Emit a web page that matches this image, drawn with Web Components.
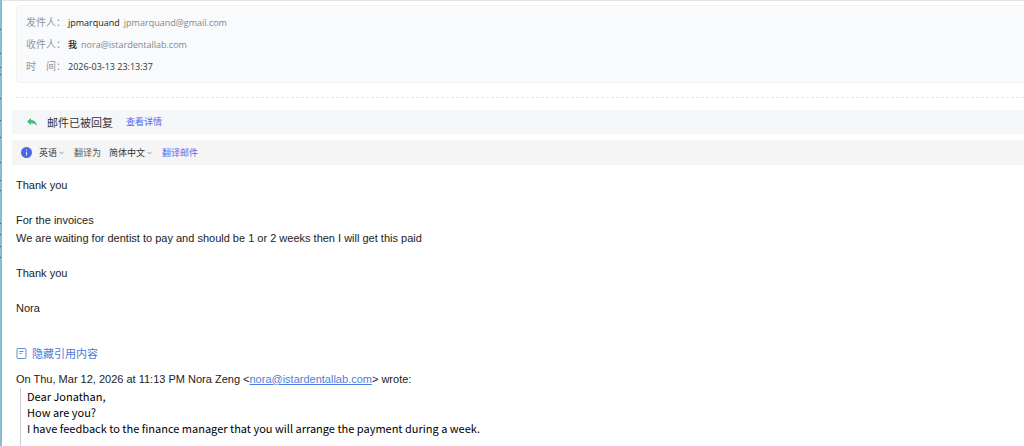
<!DOCTYPE html>
<html lang="zh-CN">
<head>
<meta charset="utf-8">
<title>邮件</title>
<style>
html, body { margin: 0; background: #fff; }
body { font-family: "Liberation Sans", "Noto Sans CJK SC", sans-serif; color: #222; overflow: hidden; }
</style>
</head>
<body>
<mail-view>
  <mail-header>
    <mail-field label="发件人："><strong>jpmarquand</strong>jpmarquand@gmail.com</mail-field>
    <mail-field label="收件人："><strong>我</strong>nora@istardentallab.com</mail-field>
    <mail-field label="时　间："><time datetime="2026-03-13T23:13:37">2026-03-13 23:13:37</time></mail-field>
  </mail-header>
  <reply-notice>邮件已被回复</reply-notice>
  <translate-bar></translate-bar>
  <mail-body>
    <p>Thank you</p>
    <p>For the invoices<br>We are waiting for dentist to pay and should be 1 or 2 weeks then I will get this paid</p>
    <p>Thank you</p>
    <p>Nora</p>
  </mail-body>
  <quoted-mail>
    <span slot="intro">On Thu, Mar 12, 2026 at 11:13 PM Nora Zeng &lt;<mail-address address="nora@istardentallab.com"></mail-address>&gt; wrote:</span>
    <p>Dear Jonathan,</p>
    <p>How are you?</p>
    <p>I have feedback to the finance manager that you will arrange the payment during a week.</p>
  </quoted-mail>
</mail-view>

<script>
function define(name, markup, setup) {
  const template = document.createElement('template');
  template.innerHTML = markup;
  customElements.define(name, class extends HTMLElement {
    connectedCallback() {
      if (this.shadowRoot) return;
      this.attachShadow({ mode: 'open' }).append(template.content.cloneNode(true));
      if (setup) setup(this, this.shadowRoot);
    }
  });
}

define('mail-view', `
<style>
  :host { display: grid; grid-template-columns: 2px minmax(0, 1fr); min-height: 100vh; }
  svg { display: block; width: 2px; height: 100%; background: linear-gradient(90deg, #92c5da, #80b0c5); }
  main { display: flex; flex-direction: column; border-top: 1px solid #e2e2e4; padding: 4px 0 0 10px; }
</style>
<svg aria-hidden="true"><path d="M0 29.500h1M0 53.500h1M0 67.500h1M0 74.500h1M0 98.500h1M0 120.500h1M0 137.500h1M0 162.500h1M0 180.500h1M0 190.500h1M0 223.500h1M0 234.500h1M0 246.500h1M0 257.500h1" stroke="#315b7e" stroke-width="1"/></svg>
<main><slot></slot></main>`);

define('mail-header', `
<style>
  :host { display: block; padding-left: 4px; }
  .card { display: flex; flex-direction: column; gap: 5px; padding: 8px 9px 7px; border: 1px solid #f0f1f2; border-right: 0; border-radius: 5px 0 0 5px; background: #f9fafc; }
  hr { margin: 14px 0 12px; border: 0; border-top: 1px dashed #e6e6e6; }
</style>
<div class="card"><slot></slot></div><hr>`);

define('mail-field', `
<style>
  :host { display: flex; align-items: center; height: 17px; font: 9px/17px "Open Sans", "Noto Sans CJK SC", sans-serif; color: #858789; }
  .label { flex: none; width: 42px; font-size: 10px; color: #949698; }
  ::slotted(strong) { font-weight: 500; color: #222; margin-right: 4px; }
  ::slotted(time) { color: #333; }
</style>
<span class="label"></span><span><slot></slot></span>`,
(host, root) => { root.querySelector('.label').textContent = host.getAttribute('label'); });

define('reply-notice', `
<style>
  :host { display: flex; align-items: center; height: 24px; padding-left: 15px; background: #f5f6fa; font: 11px/18px "Noto Sans CJK SC", sans-serif; color: #333; }
  svg { flex: none; width: 10px; height: 9px; margin-right: 10px; }
  a { margin-left: 13px; font-size: 9px; color: #5069ee; text-decoration: none; }
</style>
<svg viewBox="0 0 10 9" aria-hidden="true"><path d="M0 3.500 4 0v2c3.500 0 5.500 2.200 6 6-1.500-2.100-3.300-2.800-6-2.800V7.300z" fill="#4dbb77"/></svg>
<span><slot></slot></span><a href="#details">查看详情</a>`);

define('language-select', `
<style>
  :host { display: inline-flex; align-items: center; }
  select { appearance: none; field-sizing: content; margin: 0; padding: 0; border: 0; background: none; color: #333; font: 9px/18px "Noto Sans CJK SC", sans-serif; }
  svg { width: 5px; height: 4px; margin-left: 2px; pointer-events: none; }
</style>
<select><option></option></select><svg viewBox="0 0 5 4" aria-hidden="true"><path d="M.5.8l2 2 2-2" fill="none" stroke="#777" stroke-width=".8"/></svg>`,
(host, root) => {
  root.querySelector('option').textContent = host.getAttribute('value');
  root.querySelector('select').setAttribute('aria-label', host.getAttribute('label'));
});

define('translate-bar', `
<style>
  :host { display: flex; align-items: center; height: 25px; margin-top: 6px; padding-left: 9px; background: #f5f5f5; font: 9px/18px "Noto Sans CJK SC", sans-serif; color: #555; }
  svg { flex: none; width: 11px; height: 11px; margin-right: 7px; }
  span { margin: 0 8px 0 10px; }
  button { margin: 0 0 0 10px; padding: 0; border: 0; background: none; color: #5069ee; font: inherit; }
</style>
<svg viewBox="0 0 11 11" aria-hidden="true"><circle cx="5.500" cy="5.500" r="5.500" fill="#4868e8"/><path d="M5.500 2.500v1.200M5.500 4.700v3.800" stroke="#dce4ff" stroke-width="1"/></svg>
<language-select label="源语言" value="英语"></language-select><span>翻译为</span><language-select label="目标语言" value="简体中文"></language-select><button type="button">翻译邮件</button>`);

define('mail-address', `<style>
  :host { display: inline; }
  a { color: #4b7fe0; text-decoration: underline; }
</style><a></a>`,
(host, root) => {
  const link = root.querySelector('a');
  link.textContent = host.getAttribute('address');
  link.href = 'mailto:' + host.getAttribute('address');
});

define('mail-body', `
<style>
  :host { display: flex; flex-direction: column; gap: 17px; padding: 11px 4px 0; font-size: 11px; line-height: 18px; }
  ::slotted(p) { margin: 0; }
</style>
<slot></slot>`);

define('quoted-mail', `
<style>
  :host { display: block; padding: 27px 4px 0; }
  button { display: flex; align-items: center; gap: 5px; height: 18px; margin: 0; padding: 0; border: 0; background: none; font: 11px/18px "Noto Sans CJK SC", sans-serif; color: #4a7bd8; }
  svg { width: 11px; height: 11px; }
  .intro { margin-top: 9px; font-size: 11px; line-height: 17px; }
  blockquote { margin: 0 0 0 4px; padding: 0 0 16px 6px; border-left: 1px solid #ccc; font: 11px/16px "Noto Sans CJK SC", sans-serif; color: #000; }
  ::slotted(p) { margin: 0; }
</style>
<button type="button"><svg viewBox="0 0 11 11" fill="none" stroke="#5c92d2" aria-hidden="true"><rect x="1" y=".5" width="9" height="10" rx="1"/><path d="M3.500 3.500h4M3.500 5.500h2"/></svg>隐藏引用内容</button>
<div class="intro"><slot name="intro"></slot></div>
<blockquote><slot></slot></blockquote>`);
</script>
</body>
</html>
